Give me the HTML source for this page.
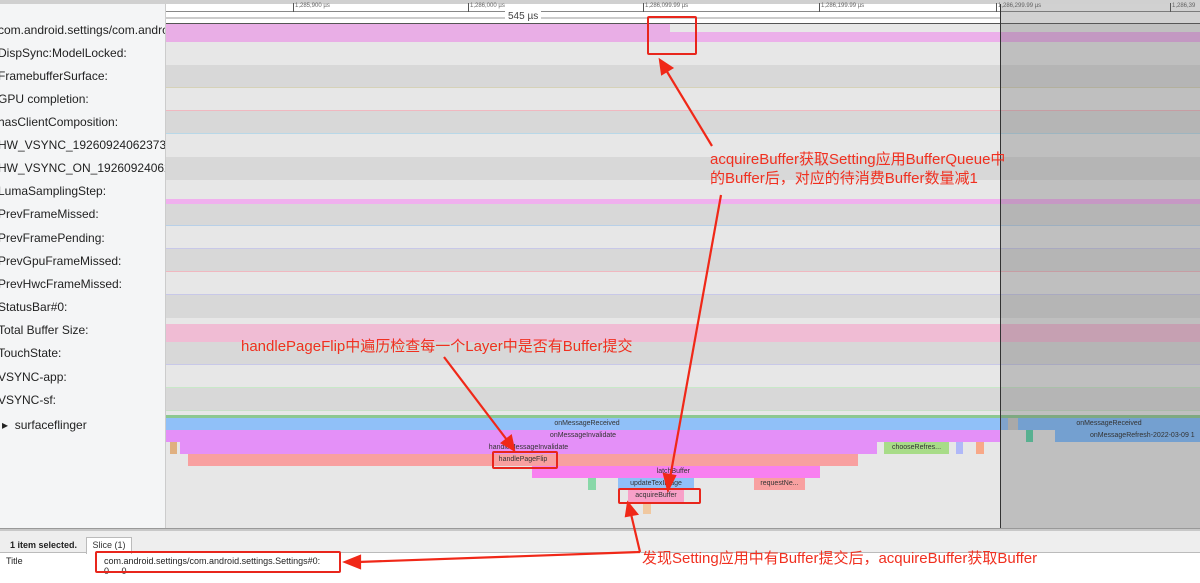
<!DOCTYPE html>
<html><head><meta charset="utf-8"><style>
*{margin:0;padding:0;box-sizing:border-box}
body{width:1200px;height:583px;overflow:hidden;background:#fff;font-family:"Liberation Sans","Noto Sans CJK SC",sans-serif;position:relative}
.a{position:absolute}
.lp{position:absolute;left:0;top:0;width:165px;height:528px;overflow:hidden}
.lbl{position:absolute;left:-2px;font-size:12px;color:#222;white-space:nowrap;line-height:14px}
.tr{position:absolute;left:166px;width:1034px}
.L{background:#e7e7e7}.D{background:#d8d8d8}
.s{position:absolute;height:12px;font-size:7px;line-height:12px;text-align:center;color:#333;overflow:hidden;white-space:nowrap}
.ann{position:absolute;color:#f03020;font-size:15px;white-space:nowrap;font-family:"Liberation Sans","Noto Sans CJK SC",sans-serif}
.box{position:absolute;border:2px solid #e8261c;border-radius:2px}
</style></head><body>
<div class="a" style="left:0;top:0;width:166px;height:528px;background:#f4f5f6;border-right:1px solid #ccc"></div>
<div class="a" style="left:0;top:0;width:1200px;height:4px;background:#d0d0d0"></div>
<div class="a" style="left:166px;top:4px;width:1034px;height:20px;background:#fff;border-bottom:1px solid #555"></div>
<div class="a" style="left:166px;top:11px;width:1034px;height:1px;background:#888"></div>
<div class="a" style="left:166px;top:17px;width:834px;height:2px;background:#ccc"></div>
<div class="a" style="left:505px;top:11px;font-size:10px;color:#444;background:#fff;padding:0 3px">545 µs</div>
<div class="a" style="left:293px;top:3px;font-size:6px;color:#666;border-left:1px solid #555;padding-left:1px;height:9px">1,285,900 µs</div>
<div class="a" style="left:468px;top:3px;font-size:6px;color:#666;border-left:1px solid #555;padding-left:1px;height:9px">1,286,000 µs</div>
<div class="a" style="left:643px;top:3px;font-size:6px;color:#666;border-left:1px solid #555;padding-left:1px;height:9px">1,286,099.99 µs</div>
<div class="a" style="left:819px;top:3px;font-size:6px;color:#666;border-left:1px solid #555;padding-left:1px;height:9px">1,286,199.99 µs</div>
<div class="a" style="left:996px;top:3px;font-size:6px;color:#666;border-left:1px solid #555;padding-left:1px;height:9px">1,286,299.99 µs</div>
<div class="a" style="left:1170px;top:3px;font-size:6px;color:#666;border-left:1px solid #555;padding-left:1px;height:9px">1,286,39</div>

<div class="tr" style="top:24px;height:18px;background:#e8e8e8"></div>
<div class="a" style="left:166px;top:24px;width:504px;height:18px;background:#e9aee6"></div>
<div class="a" style="left:670px;top:32px;width:530px;height:10px;background:#ecb0ea"></div>
<div class="tr L" style="top:42px;height:23px"></div>
<div class="tr D" style="top:65px;height:23px;border-bottom:1px solid #d6d2b8"></div>
<div class="tr L" style="top:88px;height:23px;border-bottom:1px solid #f0b8c0"></div>
<div class="tr D" style="top:111px;height:23px;border-bottom:1px solid #b8d8e8"></div>
<div class="tr L" style="top:134px;height:23px"></div>
<div class="tr D" style="top:157px;height:23px"></div>
<div class="tr L" style="top:180px;height:19px"></div>
<div class="tr" style="top:199px;height:5px;background:#f0b0ee"></div>
<div class="tr D" style="top:204px;height:22px;border-bottom:1px solid #b8d0e8"></div>
<div class="tr L" style="top:226px;height:23px;border-bottom:1px solid #c8c8e8"></div>
<div class="tr D" style="top:249px;height:23px;border-bottom:1px solid #f0b8c0"></div>
<div class="tr L" style="top:272px;height:23px;border-bottom:1px solid #c8c8e8"></div>
<div class="tr D" style="top:295px;height:23px"></div>
<div class="tr L" style="top:318px;height:6px"></div>
<div class="tr" style="top:324px;height:18px;background:#f0bcd4"></div>
<div class="tr D" style="top:342px;height:23px;border-bottom:1px solid #c8c8e8"></div>
<div class="tr L" style="top:365px;height:23px;border-bottom:1px solid #c8e8c8"></div>
<div class="tr D" style="top:388px;height:23px;border-bottom:1px solid #c8e0c8"></div>
<div class="tr L" style="top:411px;height:5px"></div>
<div class="tr" style="top:415px;height:3px;background:#8cc890"></div>
<div class="tr L" style="top:418px;height:110px"></div>

<div class="lp">
<div class="lbl" style="top:23px">com.android.settings/com.android</div>
<div class="lbl" style="top:46px">DispSync:ModelLocked:</div>
<div class="lbl" style="top:69px">FramebufferSurface:</div>
<div class="lbl" style="top:92px">GPU completion:</div>
<div class="lbl" style="top:115px">hasClientComposition:</div>
<div class="lbl" style="top:138px">HW_VSYNC_1926092406237325</div>
<div class="lbl" style="top:161px">HW_VSYNC_ON_192609240623</div>
<div class="lbl" style="top:184px">LumaSamplingStep:</div>
<div class="lbl" style="top:207px">PrevFrameMissed:</div>
<div class="lbl" style="top:231px">PrevFramePending:</div>
<div class="lbl" style="top:254px">PrevGpuFrameMissed:</div>
<div class="lbl" style="top:277px">PrevHwcFrameMissed:</div>
<div class="lbl" style="top:300px">StatusBar#0:</div>
<div class="lbl" style="top:323px">Total Buffer Size:</div>
<div class="lbl" style="top:346px">TouchState:</div>
<div class="lbl" style="top:370px">VSYNC-app:</div>
<div class="lbl" style="top:393px">VSYNC-sf:</div>
<div class="lbl" style="top:418px;left:2px;font-size:12px">▸&nbsp; surfaceflinger</div>
</div>

<div class="s" style="left:166px;top:418px;width:842px;background:#90c0f8">onMessageReceived</div>
<div class="s" style="left:166px;top:430px;width:834px;background:#e490f8">onMessageInvalidate</div>
<div class="s" style="left:180px;top:442px;width:697px;background:#e490f8">handleMessageInvalidate</div>
<div class="s" style="left:170px;top:442px;width:7px;background:#e0b080"></div>
<div class="s" style="left:188px;top:454px;width:670px;background:#f8a0a0">handlePageFlip</div>
<div class="s" style="left:532px;top:466px;width:288px;background:#f880f0;text-align:right;padding-right:130px">latchBuffer</div>
<div class="s" style="left:618px;top:478px;width:76px;background:#90c0f8">updateTexImage</div>
<div class="s" style="left:588px;top:478px;width:8px;background:#88d8a8"></div>
<div class="s" style="left:754px;top:478px;width:51px;background:#f8a0a0">requestNe...</div>
<div class="s" style="left:628px;top:490px;width:56px;background:#f8a0c8">acquireBuffer</div>
<div class="s" style="left:643px;top:502px;width:8px;background:#f0c8a0"></div>
<div class="s" style="left:884px;top:442px;width:65px;background:#a8dc88">chooseRefres...</div>
<div class="s" style="left:956px;top:442px;width:7px;background:#b0b8f8"></div>
<div class="s" style="left:976px;top:442px;width:8px;background:#f8a888"></div>

<div class="a" style="left:1000px;top:4px;width:200px;height:524px;background:rgba(90,90,90,0.28);border-left:1px solid #333"></div>
<div class="s" style="left:1008px;top:418px;width:10px;background:#a9a9a9"></div>
<div class="s" style="left:1018px;top:418px;width:182px;background:#74a0d0">onMessageReceived</div>
<div class="s" style="left:1026px;top:430px;width:7px;background:#58b090"></div>
<div class="s" style="left:1055px;top:430px;width:145px;background:#74a0d0;text-align:left;padding-left:35px">onMessageRefresh-2022-03-09 1</div>

<div class="a" style="left:0;top:528px;width:1200px;height:3px;background:#c8c8c8;border-top:1px solid #999"></div>
<div class="a" style="left:0;top:531px;width:1200px;height:22px;background:#eeeeee;border-bottom:1px solid #bbb"></div>
<div class="a" style="left:10px;top:540px;font-size:9px;font-weight:bold;color:#222">1 item selected.</div>
<div class="a" style="left:86px;top:537px;width:46px;height:17px;background:#fff;border:1px solid #bbb;border-bottom:none;font-size:9px;color:#333;text-align:center;line-height:15px">Slice (1)</div>
<div class="a" style="left:6px;top:556px;font-size:9px;color:#222">Title</div>
<div class="a" style="left:104px;top:556px;font-size:9px;color:#222">com.android.settings/com.android.settings.Settings#0:</div>
<div class="a" style="left:104px;top:566px;font-size:9px;color:#222">0 &nbsp; &nbsp; 0</div>

<div class="box" style="left:647px;top:16px;width:50px;height:39px"></div>
<div class="box" style="left:492px;top:451px;width:66px;height:18px"></div>
<div class="box" style="left:618px;top:488px;width:83px;height:16px"></div>
<div class="box" style="left:95px;top:551px;width:246px;height:22px"></div>

<svg class="a" style="left:0;top:0" width="1200" height="583">
<g stroke="#f02818" stroke-width="2.2" fill="#f02818">
<line x1="712" y1="146" x2="666" y2="70"/><polygon points="660,60 672,68 662,74"/>
<line x1="721" y1="195" x2="670" y2="478"/><polygon points="668,490 664,474 675,476"/>
<line x1="444" y1="357" x2="507" y2="440"/><polygon points="514,450 502,443 511,436"/>
<line x1="640" y1="552" x2="631" y2="514"/><polygon points="628,503 637,514 626,516"/>
<line x1="640" y1="552" x2="358" y2="562"/><polygon points="345,562 360,556 360,568"/>
</g></svg>

<div class="ann" style="left:710px;top:150px;line-height:19px">acquireBuffer获取Setting应用BufferQueue中<br>的Buffer后，对应的待消费Buffer数量减1</div>
<div class="ann" style="left:241px;top:335px">handlePageFlip中遍历检查每一个Layer中是否有Buffer提交</div>
<div class="ann" style="left:642px;top:547px">发现Setting应用中有Buffer提交后，acquireBuffer获取Buffer</div>
</body></html>
